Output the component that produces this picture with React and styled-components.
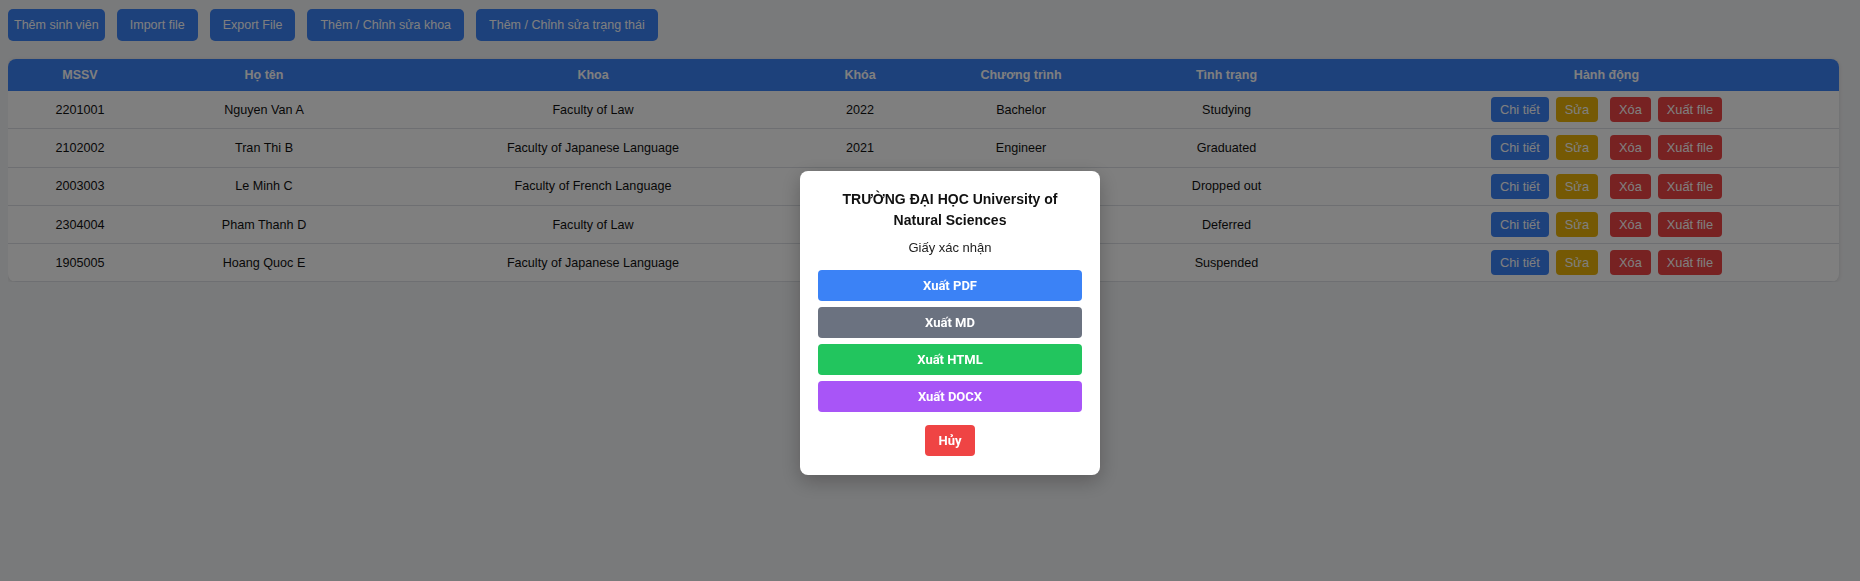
import styled, { createGlobalStyle } from "styled-components";

const GlobalStyle = createGlobalStyle`
  html, body {
    margin: 0;
    overflow: hidden;
  }
  body {
    margin: 8px;
    background: #f3f4f6;
    font-family: "Liberation Sans", Arial, sans-serif;
    color: #111;
  }
`;

const Toolbar = styled.div`
  display: flex;
  gap: 12px;
  padding-top: 1px;
`;

const ToolButton = styled.button`
  height: 32px;
  padding: 0 ${(p) => (p.$tight ? "6px" : "13px")};
  border: none;
  border-radius: 5px;
  background: #3b82f6;
  color: #fff;
  font-family: "Liberation Sans", Arial, sans-serif;
  font-size: 12.5px;
  cursor: pointer;
`;

// khung bảng bị cắt ở mép phải, bảng bên trong rộng hơn
const TableWrap = styled.div`
  margin-top: 18px;
  width: 1831px;
  background: #fff;
  border-radius: 8px;
  overflow: hidden;
  box-shadow: 0 1px 4px rgba(0, 0, 0, 0.12);
`;

const Table = styled.table`
  width: 1884px;
  border-collapse: collapse;
  table-layout: fixed;
  font-size: 12.6px;
`;

const Th = styled.th`
  height: 32px;
  padding: 0;
  background: #3b82f6;
  color: #fff;
  font-weight: bold;
  font-size: 12.5px;
  text-align: center;
`;

const Td = styled.td`
  height: 37.3px;
  padding: 0;
  text-align: center;
  border-bottom: 1px solid #dcdfe4;
  color: #111;
`;

const Actions = styled.div`
  display: inline-flex;
  gap: 7px;
  vertical-align: middle;
`;

const actionColors = {
  detail: "#3b82f6",
  edit: "#eab308",
  remove: "#ef4444",
  export: "#ef4444",
};

const ActionButton = styled.button`
  height: 25px;
  padding: 0 9px;
  margin-right: ${(p) => (p.$variant === "edit" ? "5px" : "0")};
  border: none;
  border-radius: 4px;
  background: ${(p) => actionColors[p.$variant]};
  color: #fff;
  font-family: "Liberation Sans", Arial, sans-serif;
  font-size: 12.8px;
  cursor: pointer;
`;

const Overlay = styled.div`
  position: fixed;
  top: 0;
  left: 0;
  width: 1900px;
  height: 646px;
  background: rgba(0, 0, 0, 0.5);
  display: flex;
  align-items: center;
  justify-content: center;
`;

const Modal = styled.div`
  width: 300px;
  box-sizing: border-box;
  padding: 18px 18px 19px;
  background: #fff;
  border-radius: 8px;
  box-shadow: 0 6px 20px rgba(0, 0, 0, 0.25);
  text-align: center;
`;

const Title = styled.div`
  font-size: 14px;
  font-weight: bold;
  line-height: 21px;
  color: #111;
`;

const Subtitle = styled.div`
  margin: 8px 0 13px;
  font-size: 13px;
  line-height: 18px;
  color: #222;
`;

const ExportList = styled.div`
  display: flex;
  flex-direction: column;
  gap: 6px;
`;

const ExportButton = styled.button`
  height: 31px;
  width: 100%;
  border: none;
  border-radius: 4px;
  background: ${(p) => p.$color};
  color: #fff;
  font-family: Roboto, "Liberation Sans", sans-serif;
  font-weight: bold;
  font-size: 13px;
  cursor: pointer;
`;

const CancelButton = styled(ExportButton)`
  width: auto;
  margin-top: 13px;
  padding: 0 13px;
`;

const students = [
  ["2201001", "Nguyen Van A", "Faculty of Law", "2022", "Bachelor", "Studying"],
  ["2102002", "Tran Thi B", "Faculty of Japanese Language", "2021", "Engineer", "Graduated"],
  ["2003003", "Le Minh C", "Faculty of French Language", "2020", "Bachelor", "Dropped out"],
  ["2304004", "Pham Thanh D", "Faculty of Law", "2023", "Bachelor", "Deferred"],
  ["1905005", "Hoang Quoc E", "Faculty of Japanese Language", "2019", "Engineer", "Suspended"],
];

const colWidths = [144, 224, 434, 100, 222, 189, 571];
const headers = ["MSSV", "Họ tên", "Khoa", "Khóa", "Chương trình", "Tình trạng", "Hành động"];

export default function App() {
  return (
    <>
      <GlobalStyle />
      <Toolbar>
        <ToolButton $tight>Thêm sinh viên</ToolButton>
        <ToolButton>Import file</ToolButton>
        <ToolButton>Export File</ToolButton>
        <ToolButton>Thêm / Chỉnh sửa khoa</ToolButton>
        <ToolButton>Thêm / Chỉnh sửa trạng thái</ToolButton>
      </Toolbar>

      <TableWrap>
        <Table>
          <colgroup>
            {colWidths.map((w, i) => (
              <col key={i} style={{ width: w }} />
            ))}
          </colgroup>
          <thead>
            <tr>
              {headers.map((h) => (
                <Th key={h}>{h}</Th>
              ))}
            </tr>
          </thead>
          <tbody>
            {students.map((s) => (
              <tr key={s[0]}>
                {s.map((v, i) => (
                  <Td key={i}>{v}</Td>
                ))}
                <Td>
                  <Actions>
                    <ActionButton $variant="detail">Chi tiết</ActionButton>
                    <ActionButton $variant="edit">Sửa</ActionButton>
                    <ActionButton $variant="remove">Xóa</ActionButton>
                    <ActionButton $variant="export">Xuất file</ActionButton>
                  </Actions>
                </Td>
              </tr>
            ))}
          </tbody>
        </Table>
      </TableWrap>

      <Overlay>
        <Modal>
          <Title>TRƯỜNG ĐẠI HỌC University of Natural Sciences</Title>
          <Subtitle>Giấy xác nhận</Subtitle>
          <ExportList>
            <ExportButton $color="#3b82f6">Xuất PDF</ExportButton>
            <ExportButton $color="#6b7280">Xuất MD</ExportButton>
            <ExportButton $color="#22c55e">Xuất HTML</ExportButton>
            <ExportButton $color="#a855f7">Xuất DOCX</ExportButton>
          </ExportList>
          <CancelButton $color="#ef4444">Hủy</CancelButton>
        </Modal>
      </Overlay>
    </>
  );
}
